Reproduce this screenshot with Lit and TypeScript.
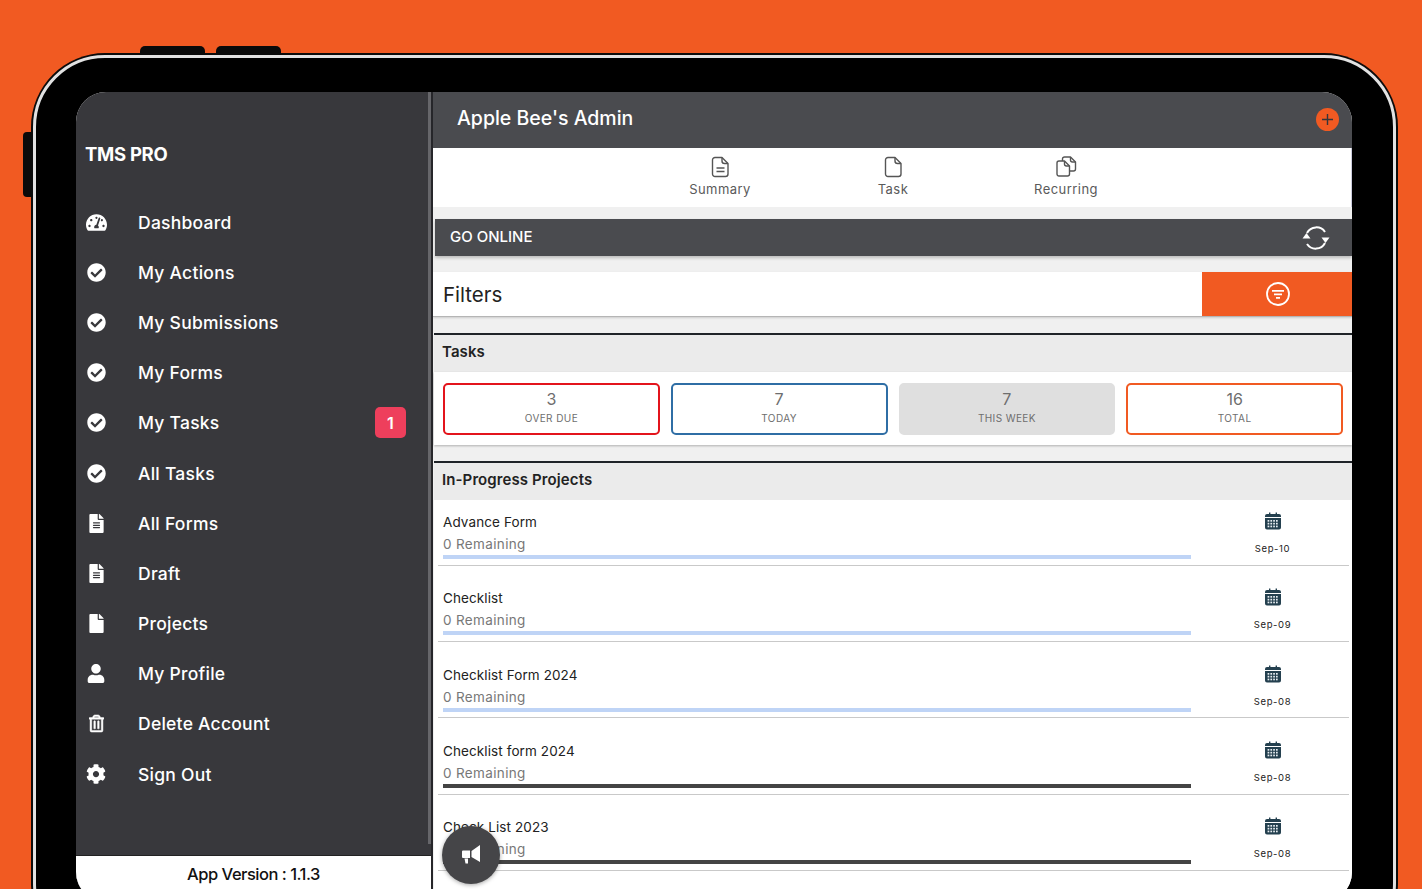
import { LitElement, html, css, svg } from "lit";
import { customElement } from "lit/decorators.js";

const CHECK = svg`<path d="M504 256c0 136.967-111.033 248-248 248S8 392.967 8 256 119.033 8 256 8s248 111.033 248 248zM227.314 387.314l184-184c6.248-6.248 6.248-16.379 0-22.627l-22.627-22.627c-6.248-6.249-16.379-6.249-22.628 0L216 308.118l-70.059-70.059c-6.248-6.248-16.379-6.248-22.628 0l-22.627 22.627c-6.248 6.248-6.248 16.379 0 22.627l104 104c6.249 6.249 16.379 6.249 22.628.001z"/>`;
const FILE_ALT = svg`<path d="M224 136V0H24C10.7 0 0 10.7 0 24v464c0 13.3 10.7 24 24 24h336c13.3 0 24-10.7 24-24V160H248c-13.2 0-24-10.8-24-24zm64 236c0 6.6-5.4 12-12 12H108c-6.6 0-12-5.4-12-12v-8c0-6.6 5.4-12 12-12h168c6.6 0 12 5.4 12 12v8zm0-64c0 6.6-5.4 12-12 12H108c-6.6 0-12-5.4-12-12v-8c0-6.6 5.4-12 12-12h168c6.6 0 12 5.4 12 12v8zm0-72v8c0 6.6-5.4 12-12 12H108c-6.6 0-12-5.4-12-12v-8c0-6.6 5.4-12 12-12h168c6.6 0 12 5.4 12 12zm96-114.1v6.1H256V0h6.1c6.4 0 12.5 2.5 17 7l97.9 98c4.5 4.5 7 10.6 7 16.9z"/>`;
const FILE = svg`<path d="M224 136V0H24C10.7 0 0 10.7 0 24v464c0 13.3 10.7 24 24 24h336c13.3 0 24-10.7 24-24V160H248c-13.2 0-24-10.8-24-24zm160-14.1v6.1H256V0h6.1c6.4 0 12.5 2.5 17 7l97.9 98c4.5 4.5 7 10.6 7 16.9z"/>`;
const USER = svg`<path d="M224 256c70.7 0 128-57.3 128-128S294.7 0 224 0 96 57.3 96 128s57.3 128 128 128zm89.6 32h-16.7c-22.2 10.2-46.9 16-72.9 16s-50.6-5.8-72.9-16h-16.7C60.2 288 0 348.2 0 422.4V464c0 26.5 21.5 48 48 48h352c26.5 0 48-21.5 48-48v-41.6c0-74.2-60.2-134.4-134.4-134.4z"/>`;
const TRASH = svg`<path stroke="#fff" stroke-width="14" d="M268 416h24a12 12 0 0 0 12-12V188a12 12 0 0 0-12-12h-24a12 12 0 0 0-12 12v216a12 12 0 0 0 12 12zM432 80h-82.41l-34-56.7A48 48 0 0 0 274.41 0H173.59a48 48 0 0 0-41.16 23.3L98.41 80H16A16 16 0 0 0 0 96v16a16 16 0 0 0 16 16h16v336a48 48 0 0 0 48 48h288a48 48 0 0 0 48-48V128h16a16 16 0 0 0 16-16V96a16 16 0 0 0-16-16zM171.84 50.91A6 6 0 0 1 177 48h94a6 6 0 0 1 5.15 2.91L293.61 80H154.39zM368 464H80V128h288zm-212-48h24a12 12 0 0 0 12-12V188a12 12 0 0 0-12-12h-24a12 12 0 0 0-12 12v216a12 12 0 0 0 12 12z"/>`;
const COG = svg`<path d="M487.4 315.7l-42.6-24.6c4.3-23.2 4.3-47 0-70.2l42.6-24.6c4.9-2.8 7.1-8.6 5.5-14-11.1-35.6-30-67.8-54.7-94.6-3.8-4.1-10-5.1-14.8-2.3L380.8 110c-17.9-15.4-38.5-27.3-60.8-35.1V25.8c0-5.6-3.9-10.5-9.4-11.7-36.7-8.2-74.3-7.8-109.2 0-5.5 1.2-9.4 6.1-9.4 11.7V75c-22.2 7.9-42.8 19.8-60.8 35.1L88.7 85.5c-4.9-2.8-11-1.9-14.8 2.3-24.7 26.7-43.6 58.9-54.7 94.6-1.7 5.4.6 11.2 5.5 14L67.3 221c-4.3 23.2-4.3 47 0 70.2l-42.6 24.6c-4.9 2.8-7.1 8.6-5.5 14 11.1 35.6 30 67.8 54.7 94.6 3.8 4.1 10 5.1 14.8 2.3l42.6-24.6c17.9 15.4 38.5 27.3 60.8 35.1v49.2c0 5.6 3.9 10.5 9.4 11.7 36.7 8.2 74.3 7.8 109.2 0 5.5-1.2 9.4-6.1 9.4-11.7v-49.2c22.2-7.9 42.8-19.8 60.8-35.1l42.6 24.6c4.9 2.8 11 1.9 14.8-2.3 24.7-26.7 43.6-58.9 54.7-94.6 1.5-5.5-.7-11.3-5.6-14.1zM256 336c-44.1 0-80-35.9-80-80s35.9-80 80-80 80 35.9 80 80-35.9 80-80 80z"/>`;
const GAUGE = svg`<path d="M288 32C128.94 32 0 160.94 0 320c0 52.8 14.25 102.26 39.06 144.8 5.61 9.62 16.3 15.2 27.44 15.2h443c11.14 0 21.83-5.58 27.44-15.2C561.75 422.26 576 372.8 576 320c0-159.06-128.94-288-288-288zm0 64c14.71 0 26.58 10.13 30.32 23.65-1.11 2.26-2.64 4.23-3.45 6.67l-9.22 27.67c-5.13 3.49-10.97 6.01-17.64 6.01-17.67 0-32-14.33-32-32S270.33 96 288 96zM96 384c-17.67 0-32-14.33-32-32s14.33-32 32-32 32 14.33 32 32-14.33 32-32 32zm48-160c-17.67 0-32-14.33-32-32s14.33-32 32-32 32 14.33 32 32-14.33 32-32 32zm246.77-72.41l-61.33 184C343.13 347.33 352 364.54 352 384c0 11.72-3.38 22.55-8.88 32H232.88c-5.5-9.45-8.88-20.28-8.88-32 0-33.94 26.5-61.43 59.9-63.59l61.34-184.01c4.17-12.56 17.73-19.45 30.36-15.17 12.57 4.19 19.35 17.79 15.17 30.36zm14.66 57.2l15.52-46.55c3.47-1.29 7.13-2.23 11.05-2.23 17.67 0 32 14.33 32 32s-14.33 32-32 32c-11.38-.01-20.89-6.28-26.57-15.22zM480 384c-17.67 0-32-14.33-32-32s14.33-32 32-32 32 14.33 32 32-14.33 32-32 32z"/>`;

type Icon = { box: string; w: number; h: number; body: unknown };
const icons: Record<string, Icon> = {
  gauge: { box: "0 0 576 512", w: 21, h: 19, body: GAUGE },
  check: { box: "0 0 512 512", w: 19, h: 19, body: CHECK },
  fileAlt: { box: "0 0 384 512", w: 15, h: 19, body: FILE_ALT },
  file: { box: "0 0 384 512", w: 15, h: 19, body: FILE },
  user: { box: "0 0 448 512", w: 18, h: 19, body: USER },
  trash: { box: "0 0 448 512", w: 15, h: 19, body: TRASH },
  cog: { box: "0 0 512 512", w: 20, h: 20, body: COG },
};

const menu = [
  { label: "Dashboard", icon: "gauge" },
  { label: "My Actions", icon: "check" },
  { label: "My Submissions", icon: "check" },
  { label: "My Forms", icon: "check" },
  { label: "My Tasks", icon: "check", badge: "1" },
  { label: "All Tasks", icon: "check" },
  { label: "All Forms", icon: "fileAlt" },
  { label: "Draft", icon: "fileAlt" },
  { label: "Projects", icon: "file" },
  { label: "My Profile", icon: "user" },
  { label: "Delete Account", icon: "trash" },
  { label: "Sign Out", icon: "cog" },
];

const tiles = [
  { n: "3", label: "OVER DUE", cls: "red" },
  { n: "7", label: "TODAY", cls: "blue" },
  { n: "7", label: "THIS WEEK", cls: "grey" },
  { n: "16", label: "TOTAL", cls: "orange" },
];

const projects = [
  { name: "Advance Form", date: "Sep-10", dark: false },
  { name: "Checklist", date: "Sep-09", dark: false },
  { name: "Checklist Form 2024", date: "Sep-08", dark: false },
  { name: "Checklist form 2024", date: "Sep-08", dark: true },
  { name: "Check List 2023", date: "Sep-08", dark: true },
];

@customElement("app-root")
export class AppRoot extends LitElement {
  static styles = css`
    :host {
      display: block;
      width: 1422px;
      height: 889px;
      overflow: hidden;
      background: #f15a22;
      font-family: Inter, "Liberation Sans", sans-serif;
      box-sizing: border-box;
      padding: 55px 26px 0 33px;
    }
    * {
      box-sizing: border-box;
    }
    .device {
      position: relative;
      height: 900px;
      background: #000;
      border: 3px solid #e2e2e2;
      border-radius: 72px;
      box-shadow: 0 0 0 2px #0c0c0c;
      padding: 34px 41px 0 40px;
    }
    .hw {
      position: absolute;
      background: #0a0a0a;
    }
    .hw.vol1 {
      left: 104px;
      top: -12px;
      width: 65px;
      height: 9px;
      border-radius: 5px 5px 0 0;
    }
    .hw.vol2 {
      left: 180px;
      top: -12px;
      width: 65px;
      height: 9px;
      border-radius: 5px 5px 0 0;
    }
    .hw.power {
      left: -13px;
      top: 74px;
      width: 9px;
      height: 65px;
      border-radius: 4px 0 0 4px;
    }
    .screen {
      display: grid;
      grid-template-columns: 355px 1fr;
      height: 810px;
      border-radius: 30px;
      overflow: hidden;
      background: #f0f0f0;
    }

    .side {
      position: relative;
      display: flex;
      flex-direction: column;
      background: #38383c;
      color: #fff;
    }
    .scroll {
      position: absolute;
      right: 0;
      top: 0;
      width: 3px;
      height: 752px;
      background: #66666a;
    }
    .brand {
      height: 105px;
      padding: 50px 0 0 9px;
      font-size: 18.5px;
      line-height: 24px;
      font-weight: 700;
      letter-spacing: -0.3px;
    }
    nav {
      flex: 1;
    }
    .item {
      display: flex;
      align-items: center;
      height: 50.2px;
      padding-right: 25px;
      font-size: 17.5px;
      font-weight: 500;
      letter-spacing: 0.25px;
    }
    .ico {
      width: 40px;
      display: flex;
      justify-content: center;
      fill: #fff;
      margin-right: 22px;
    }
    .lbl {
      flex: 1;
    }
    .badge {
      width: 31px;
      height: 31px;
      margin-left: -1px;
      border-radius: 5px;
      background: #ee3f5c;
      display: flex;
      align-items: center;
      justify-content: center;
      font-size: 16px;
      font-weight: 600;
    }
    .version {
      height: 47px;
      background: #fff;
      border-top: 1px solid #222;
      color: #111;
      display: flex;
      justify-content: center;
      padding-top: 8px;
      font-size: 16.5px;
      font-weight: 500;
      letter-spacing: -0.5px;
    }

    .main {
      position: relative;
      display: flex;
      flex-direction: column;
      border-left: 2px solid #26262a;
      min-width: 0;
      overflow: hidden;
    }
    .top {
      height: 56px;
      flex: none;
      background: #4a4b4f;
      color: #fff;
      display: flex;
      align-items: center;
      justify-content: space-between;
      padding: 0 13px 4px 24px;
      font-size: 19.5px;
      font-weight: 500;
      box-shadow: 0 1px 2px #bbb;
    }
    .plus {
      width: 23px;
      height: 23px;
      border-radius: 50%;
      background: #f15a22;
      display: flex;
      align-items: center;
      justify-content: center;
      margin-top: 3px;
    }
    .tabs {
      flex: none;
      height: 59px;
      background: #fff;
      border-right: 1px solid #ccd;
      display: grid;
      grid-template-columns: 173px 173px 173px;
      justify-content: center;
      padding-left: 2px;
    }
    .tab {
      display: flex;
      flex-direction: column;
      align-items: center;
      padding-top: 8px;
      color: #5a5a5a;
      font-size: 13px;
      line-height: 16px;
      letter-spacing: 0.45px;
      gap: 3px;
    }
    .online {
      flex: none;
      height: 37px;
      margin: 12px 0 16px 2px;
      background: #4a4b4f;
      color: #fff;
      display: flex;
      align-items: center;
      justify-content: space-between;
      padding: 0 22px 2px 15px;
      font-size: 15px;
      font-weight: 500;
      box-shadow: 0 2px 3px #bdbdbd;
    }
    .online svg {
      margin-top: 2px;
    }
    .filters {
      flex: none;
      height: 45px;
      background: #fff;
      display: flex;
      align-items: center;
      justify-content: space-between;
      border-bottom: 1px solid #b5b5b5;
      font-size: 20.5px;
      color: #222;
      padding-left: 10px;
      box-shadow: 0 1px 2px #ccc;
    }
    .fbtn {
      width: 150px;
      height: 44px;
      padding-left: 2px;
      background: #f15a22;
      display: flex;
      align-items: center;
      justify-content: center;
    }
    .panel {
      flex: none;
      margin: 16px 0 0 1px;
      border-top: 2px solid #1f2328;
      background: #fff;
    }
    .panel.fill {
      flex: 1;
      margin-top: 15px;
    }
    .head {
      height: 37px;
      background: #ebebeb;
      display: flex;
      align-items: center;
      padding: 0 0 4px 8px;
      font-size: 15px;
      font-weight: 600;
      color: #222;
      letter-spacing: 0.1px;
    }
    .tiles {
      height: 73px;
      padding: 11px 9px 0 9px;
      display: grid;
      grid-template-columns: repeat(4, 1fr);
      gap: 11px;
      box-shadow: 0 1px 2px #aaa;
      margin-bottom: 1px;
    }
    .tile {
      height: 52px;
      border-radius: 5px;
      border: 2px solid #ccc;
      background: #fff;
      display: flex;
      flex-direction: column;
      align-items: center;
      padding-top: 4px;
      color: #6e6e6e;
      font-size: 16px;
      line-height: 20px;
    }
    .tile small {
      font-size: 10px;
      line-height: 14px;
      letter-spacing: 0.4px;
      margin-top: 2px;
    }
    .tile.red {
      border-color: #e3141c;
    }
    .tile.blue {
      border-color: #2f6ea5;
    }
    .tile.grey {
      border-color: #dfdfdf;
      background: #dfdfdf;
    }
    .tile.orange {
      border-color: #f15a22;
    }
    .row {
      position: relative;
      display: grid;
      grid-template-columns: 1fr 158px;
      height: 76.3px;
      padding: 14px 0 0 9px;
      margin-right: 3px;
    }
    .row::after {
      content: "";
      position: absolute;
      left: 4px;
      right: 0;
      bottom: 10.5px;
      height: 1px;
      background: #c9c9c9;
    }
    .name {
      font-size: 13.5px;
      line-height: 17px;
      color: #222;
      letter-spacing: 0.1px;
    }
    .rem {
      font-size: 13.5px;
      line-height: 17px;
      color: #777;
      margin-top: 5px;
      letter-spacing: 0.35px;
    }
    .bar {
      height: 4px;
      margin-top: 2px;
      background: #bfd4f6;
    }
    .bar.dark {
      background: #444;
    }
    .when {
      display: flex;
      flex-direction: column;
      align-items: center;
      font-size: 9.5px;
      letter-spacing: 0.6px;
      color: #222;
      line-height: 12px;
      gap: 13px;
      margin: -2px 0 0 5px;
    }
    .fab {
      position: absolute;
      left: 9px;
      bottom: 18px;
      width: 58px;
      height: 58px;
      border-radius: 50%;
      background: #454548;
      box-shadow: 0 1px 4px rgba(0, 0, 0, 0.35);
      display: flex;
      align-items: center;
      justify-content: center;
    }
  `;

  icon(name: string) {
    const i = icons[name];
    return html`<span class="ico"
      ><svg width=${i.w} height=${i.h} viewBox=${i.box}>${i.body}</svg></span
    >`;
  }

  calendar() {
    const dots = [];
    for (let y = 8; y < 15; y += 2.8) {
      for (let x = 3.6; x < 14; x += 2.8) {
        dots.push(svg`<rect x=${x} y=${y} width="1.7" height="1.7" fill="#e8eef2"/>`);
      }
    }
    return html`<svg width="18" height="18" viewBox="0 0 18 18">
      <path
        fill="#24404f"
        d="M3 2h2V.6h1.4V2h5.2V.6H13V2h2a2 2 0 0 1 2 2v1H1V4a2 2 0 0 1 2-2zM1 6h16v9.5a2 2 0 0 1-2 2H3a2 2 0 0 1-2-2z"
      />
      ${dots}
    </svg>`;
  }

  render() {
    return html`
      <div class="device">
        <div class="hw vol1"></div>
        <div class="hw vol2"></div>
        <div class="hw power"></div>
        <div class="screen">
          <aside class="side">
            <div class="scroll"></div>
            <div class="brand">TMS PRO</div>
            <nav>
              ${menu.map(
                (m) => html`<div class="item">
                  ${this.icon(m.icon)}
                  <span class="lbl">${m.label}</span>
                  ${m.badge ? html`<span class="badge">${m.badge}</span>` : ""}
                </div>`
              )}
            </nav>
            <div class="version">App Version : 1.1.3</div>
          </aside>
          <section class="main">
            <header class="top">
              <span>Apple Bee's Admin</span>
              <span class="plus">
                <svg width="13" height="13" viewBox="0 0 13 13" stroke="#35353a" stroke-width="1.4">
                  <path d="M6.5 1v11M1 6.5h11" />
                </svg>
              </span>
            </header>
            <div class="tabs">
              <div class="tab">
                <svg width="19" height="22" viewBox="0 0 19 22" fill="none" stroke="#555" stroke-width="1.4" stroke-linejoin="round">
                  <path d="M4 1.5h7l6 6V18a2.5 2.5 0 0 1-2.5 2.5H4A2.5 2.5 0 0 1 1.5 18V4A2.5 2.5 0 0 1 4 1.5z" />
                  <path d="M11 1.5V5a2.500 2.500 0 0 0 2.500 2.500H17M5.500 12h8M5.500 15.500h8" />
                </svg>
                Summary
              </div>
              <div class="tab">
                <svg width="19" height="22" viewBox="0 0 19 22" fill="none" stroke="#555" stroke-width="1.4" stroke-linejoin="round">
                  <path d="M4 1.5h7l6 6V18a2.5 2.5 0 0 1-2.5 2.5H4A2.5 2.5 0 0 1 1.5 18V4A2.5 2.5 0 0 1 4 1.5z" />
                  <path d="M11 1.5V5a2.500 2.500 0 0 0 2.500 2.500H17" />
                </svg>
                Task
              </div>
              <div class="tab">
                <svg width="21" height="22" viewBox="0 0 21 22" fill="none" stroke="#555" stroke-width="1.4" stroke-linejoin="round">
                  <path d="M3 5h5.500l5 5v8a2 2 0 0 1-2 2H3a2 2 0 0 1-2-2V7a2 2 0 0 1 2-2z" />
                  <path d="M8.500 5v3a2 2 0 0 0 2 2h3" />
                  <path d="M6.500 5V3a2 2 0 0 1 2-2h6l5 5v7a2 2 0 0 1-2 2h-3.500" />
                  <path d="M14.500 1v3a2 2 0 0 0 2 2h3" />
                </svg>
                Recurring
              </div>
            </div>
            <div class="online">
              <span>GO ONLINE</span>
              <svg width="28" height="26" viewBox="0 0 28 26" fill="none" stroke="#fff" stroke-width="2">
                <path d="M5 8A10.500 10.500 0 0 1 23 7" />
                <path d="M23 18A10.500 10.500 0 0 1 5 19" />
                <path fill="#fff" stroke="none" d="M4.500 8L0.500 13.500h8zM23.500 18L19.500 12.500h8z" />
              </svg>
            </div>
            <div class="filters">
              <span>Filters</span>
              <span class="fbtn">
                <svg width="24" height="24" viewBox="0 0 24 24" fill="none" stroke="#fff" stroke-width="1.8">
                  <circle cx="12" cy="12" r="11" />
                  <path d="M6 8.800h12M8 12.300h8M10 15.800h4" />
                </svg>
              </span>
            </div>
            <div class="panel">
              <div class="head">Tasks</div>
              <div class="tiles">
                ${tiles.map(
                  (t) => html`<div class="tile ${t.cls}">
                    ${t.n}<small>${t.label}</small>
                  </div>`
                )}
              </div>
            </div>
            <div class="panel fill">
              <div class="head">In-Progress Projects</div>
              ${projects.map(
                (p) => html`<div class="row">
                  <div>
                    <div class="name">${p.name}</div>
                    <div class="rem">0 Remaining</div>
                    <div class="bar ${p.dark ? "dark" : ""}"></div>
                  </div>
                  <div class="when">${this.calendar()}<span>${p.date}</span></div>
                </div>`
              )}
            </div>
            <div class="fab">
              <svg width="20" height="22" viewBox="0 0 20 22" fill="#fff">
                <path d="M10.500 7L19 1v17l-8.500-5zM1 7.500a1 1 0 0 1 1-1h7v7.500H2a1 1 0 0 1-1-1zM3.500 14.500h3.500v5H4.500z" />
              </svg>
            </div>
          </section>
        </div>
      </div>
    `;
  }
}
